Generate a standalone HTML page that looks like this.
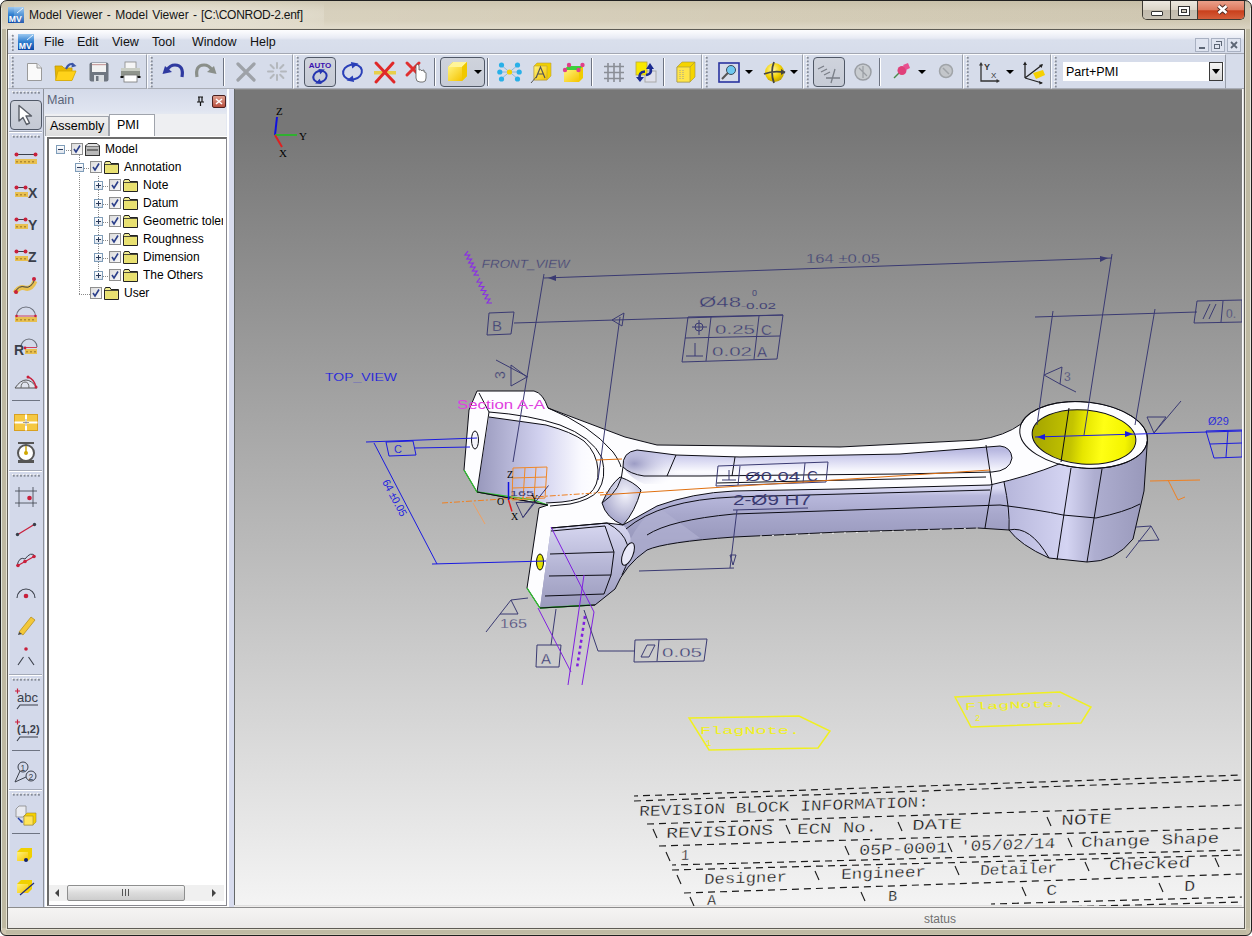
<!DOCTYPE html>
<html><head><meta charset="utf-8">
<style>
*{margin:0;padding:0;box-sizing:border-box}
html,body{width:1252px;height:936px;overflow:hidden;background:#fff}
body{position:relative;font-family:"Liberation Sans",sans-serif;font-size:12px;color:#000}
.a{position:absolute}
svg{position:absolute;overflow:visible}
#frame{left:0;top:0;width:1252px;height:936px;border:1px solid #202020;border-radius:7px 7px 6px 6px;background:linear-gradient(90deg,rgba(255,255,255,0.06) 0%,rgba(255,255,255,0.12) 25%,rgba(255,255,255,0.04) 60%,rgba(0,0,0,0.02) 100%),linear-gradient(#c9c1a9 0px,#d2cab4 10px,#d3cbb5 20px,#ddd6c4 27px,#cfc7b0 30px,#cbc3ab 100%)}
#title{left:29px;top:8px;font-size:12px;color:#141414;white-space:nowrap}
#client{left:7px;top:29px;width:1238px;height:900px;border:1px solid #5e5c55;background:#eeeceb}
#menubar{left:8px;top:30px;width:1236px;height:24px;background:linear-gradient(#fdfdfe 0px,#f6f7fb 3px,#e8ebf4 8px,#d9dfec 10px,#d6dcea 23px);border-bottom:1px solid #a3a7b2}
.menu{top:35px;font-size:12.5px;color:#111}
.tb{top:54px;height:35px;background:#d6dcea;border-top:1px solid #fbfcfe;border-left:1px solid #fbfcfe;border-right:1px solid #9aa0ac;border-bottom:1px solid #a9adb6}
.grip{width:3px;background-image:radial-gradient(circle at 1.6px 1.6px,#858b98 0.9px,transparent 1.3px),radial-gradient(circle at 0.9px 0.9px,#ffffff 0.9px,transparent 1.3px);background-size:3.6px 3.6px}
.sepv{width:1px;height:28px;top:58px;background:#6e7482;box-shadow:1px 0 0 #fff}
.pressed{top:57px;height:30px;border:1px solid #505866;border-radius:4px;background:linear-gradient(#cfd3dc,#c6cbd6)}
.dd{width:0;height:0;border-left:4px solid transparent;border-right:4px solid transparent;border-top:4px solid #000;top:70px}
#lefttb{left:8px;top:89px;width:36px;height:818px;background:linear-gradient(90deg,#eef1f8 0,#eef1f8 1px,#d3d9ea 2px);border-right:1px solid #8d929c}
#panel{left:43px;top:89px;width:186px;height:818px;background:#d5dbea}
#splitter{left:227px;top:89px;width:7px;height:818px;background:linear-gradient(90deg,#fff 0,#fff 2px,#d8dcee 2px)}
#view{left:234px;top:89px;width:1008px;height:817px;background:linear-gradient(#777777 0%,#efefef 100%);overflow:hidden}
#rstrip{left:1242px;top:89px;width:2px;height:818px;background:linear-gradient(90deg,#fafafa 1px,#e0e0e0 1px)}
#status{left:8px;top:907px;width:1236px;height:21px;background:linear-gradient(#f5f4f3,#ebe9e8);border-top:1px solid #8c8c8c}
#statustxt{left:924px;top:912px;font-size:12px;color:#707070}
.tree{font-size:12px;color:#000;white-space:nowrap}

</style></head><body>
<div id="frame" class="a"></div>
<div class="a" style="left:1142px;top:1px;width:103px;height:19px;border:1px solid #3d3a33;border-top:none;border-radius:0 0 5px 5px;overflow:hidden">
 <div class="a" style="left:0;top:0;width:28px;height:19px;background:linear-gradient(#ece8df 0%,#dcd6c9 45%,#c3bcae 50%,#c9c3b6 100%);border-right:1px solid #3d3a33"></div>
 <div class="a" style="left:28px;top:0;width:27px;height:19px;background:linear-gradient(#ece8df 0%,#dcd6c9 45%,#c3bcae 50%,#c9c3b6 100%);border-right:1px solid #3d3a33"></div>
 <div class="a" style="left:55px;top:0;width:47px;height:19px;background:linear-gradient(#eaa08a 0%,#de7a5f 45%,#c9401c 52%,#d7633f 100%)"></div>
 <div class="a" style="left:8px;top:10px;width:12px;height:5px;background:#fff;border:1px solid #333;border-radius:1px"></div>
 <div class="a" style="left:35px;top:5px;width:12px;height:10px;background:#fff;border:1px solid #333"></div>
 <div class="a" style="left:38px;top:8px;width:6px;height:4px;background:#cfc9bd;border:1px solid #333"></div>
 <svg style="left:73px;top:3px" width="13" height="11" viewBox="0 0 13 11"><path d="M2.5 2 L10.5 9 M10.5 2 L2.5 9" stroke="#4a2a22" stroke-width="4.4" stroke-linecap="butt"/><path d="M2.5 2 L10.5 9 M10.5 2 L2.5 9" stroke="#fff" stroke-width="2.6" stroke-linecap="butt"/></svg>
</div>
<svg style="left:8px;top:7px" width="16" height="16" viewBox="0 0 16 16"><defs><linearGradient id="mvg" x1="0" y1="0" x2="0" y2="1"><stop offset="0" stop-color="#9cc8f0"/><stop offset="0.45" stop-color="#3583d2"/><stop offset="1" stop-color="#0b47a6"/></linearGradient></defs><rect width="16" height="16" fill="url(#mvg)"/><path d="M9 6 L15 1" stroke="#e8f4ff" stroke-width="1"/><text x="0.8" y="14.6" font-family="Liberation Sans" font-weight="bold" font-size="8.6" fill="#fff">MV</text></svg>
<div class="a" style="left:14px;top:2px;width:310px;height:26px;background:radial-gradient(ellipse at center,rgba(255,255,250,0.45) 0%,rgba(255,255,250,0.25) 55%,rgba(255,255,250,0) 100%)"></div>
<div id="title" class="a" style="word-spacing:1px">Model Viewer - Model Viewer -</div><div class="a" style="left:201px;top:8px;font-size:12px;color:#141414;letter-spacing:-0.25px">[C:\CONROD-2.enf]</div>
<div class="a" style="left:1px;top:8px;width:1px;height:922px;background:#e2e6dc"></div>
<div class="a" style="left:2px;top:29px;width:4px;height:899px;background:#beb9a2"></div>
<div class="a" style="left:6px;top:29px;width:1px;height:900px;background:#e6e2d2"></div>
<div class="a" style="left:1250px;top:8px;width:1px;height:922px;background:#e2e6dc"></div>
<div class="a" style="left:1246px;top:29px;width:4px;height:899px;background:#beb9a2"></div>
<div class="a" style="left:1245px;top:29px;width:1px;height:900px;background:#e6e2d2"></div>
<div class="a" style="left:6px;top:929px;width:1240px;height:5px;background:#c0bba4;border-top:1px solid #e6e2d2"></div>
<div id="client" class="a"></div>
<div id="menubar" class="a"></div>
<div class="a grip" style="left:11px;top:34px;height:17px"></div>
<svg style="left:18px;top:34px" width="16" height="16" viewBox="0 0 16 16"><rect width="16" height="16" fill="url(#mvg)"/><path d="M9 6 L15 1" stroke="#e8f4ff" stroke-width="1"/><text x="0.8" y="14.6" font-family="Liberation Sans" font-weight="bold" font-size="8.6" fill="#fff">MV</text></svg>
<div class="a menu" style="left:44px">File</div>
<div class="a menu" style="left:77px">Edit</div>
<div class="a menu" style="left:112px">View</div>
<div class="a menu" style="left:152px">Tool</div>
<div class="a menu" style="left:192px">Window</div>
<div class="a menu" style="left:250px">Help</div>
<div class="a" style="left:1195px;top:38px;width:14px;height:14px;border:1px solid #a9b1c2;background:#dfe4f0"></div>
<div class="a" style="left:1199px;top:47px;width:6px;height:2px;background:#5d6675"></div>
<div class="a" style="left:1211px;top:38px;width:14px;height:14px;border:1px solid #a9b1c2;background:#dfe4f0"></div>
<div class="a" style="left:1214px;top:44px;width:6px;height:5px;border:1.5px solid #5d6675"></div>
<div class="a" style="left:1216px;top:41px;width:6px;height:5px;border-top:1.5px solid #5d6675;border-right:1.5px solid #5d6675"></div>
<div class="a" style="left:1227px;top:38px;width:14px;height:14px;border:1px solid #a9b1c2;background:#dfe4f0"></div>
<svg style="left:1230px;top:41px" width="8" height="8" viewBox="0 0 8 8"><path d="M1 1 L7 7 M7 1 L1 7" stroke="#5d6675" stroke-width="1.8"/></svg>
<div id="status" class="a"></div>
<div id="statustxt" class="a">status</div>
<div class="a" style="left:8px;top:54px;width:1236px;height:35px;background:#d6dcea;border-bottom:1px solid #a9adb6"></div>
<div class="a tb" style="left:8px;width:139px"></div>
<div class="a grip" style="left:11px;top:56px;height:32px"></div>
<div class="a tb" style="left:147px;width:146px"></div>
<div class="a grip" style="left:150px;top:56px;height:32px"></div>
<div class="a tb" style="left:293px;width:409px"></div>
<div class="a grip" style="left:296px;top:56px;height:32px"></div>
<div class="a tb" style="left:702px;width:101px"></div>
<div class="a grip" style="left:705px;top:56px;height:32px"></div>
<div class="a tb" style="left:803px;width:160px"></div>
<div class="a grip" style="left:806px;top:56px;height:32px"></div>
<div class="a tb" style="left:963px;width:88px"></div>
<div class="a grip" style="left:966px;top:56px;height:32px"></div>
<div class="a tb" style="left:1051px;width:175px"></div>
<div class="a grip" style="left:1054px;top:56px;height:32px"></div>
<div class="a sepv" style="left:223px"></div>
<div class="a sepv" style="left:434px"></div>
<div class="a sepv" style="left:487px"></div>
<div class="a sepv" style="left:591px"></div>
<div class="a sepv" style="left:663px"></div>
<div class="a sepv" style="left:879px"></div>
<div class="a pressed" style="left:304px;width:32px"></div>
<div class="a pressed" style="left:440px;width:45px"></div>
<div class="a pressed" style="left:813px;width:32px"></div>
<div class="a dd" style="left:474px"></div>
<div class="a dd" style="left:745px"></div>
<div class="a dd" style="left:790px"></div>
<div class="a dd" style="left:918px"></div>
<div class="a dd" style="left:1006px"></div>
<svg style="left:0px;top:0px" width="1" height="1" viewBox="0 0 1 1"><defs><linearGradient id="yel" x1="0" y1="0" x2="1" y2="1"><stop offset="0" stop-color="#fff27a"/><stop offset="1" stop-color="#f5c400"/></linearGradient><linearGradient id="gry" x1="0" y1="0" x2="0" y2="1"><stop offset="0" stop-color="#eeeeee"/><stop offset="1" stop-color="#8a8a8a"/></linearGradient><radialGradient id="glob" cx="0.4" cy="0.35" r="0.7"><stop offset="0" stop-color="#fff9b0"/><stop offset="0.6" stop-color="#f2d100"/><stop offset="1" stop-color="#b89a00"/></radialGradient></defs></svg>
<svg style="left:26px;top:62px" width="17" height="20" viewBox="0 0 17 20"><path d="M1.5 1.5 H11 L15.5 6 V18.5 H1.5 Z" fill="#fafafa" stroke="#9a9a9a"/><path d="M11 1.5 V6 H15.5" fill="#e6e6e6" stroke="#9a9a9a"/></svg>
<svg style="left:54px;top:61px" width="24" height="21" viewBox="0 0 24 21"><path d="M1 5 H8 L10 7 H18 V19 H2 Z" fill="#e8b800" stroke="#c29a00" stroke-width="0.8"/><path d="M4 10 H22 L18 19.5 H1.5 Z" fill="#ffd21a" stroke="#d6a800" stroke-width="0.8"/><path d="M12 8 Q15 1 20 4" fill="none" stroke="#3b56a8" stroke-width="2"/><path d="M18 1.5 L22.5 5 L17.5 6.5 Z" fill="#3b56a8"/></svg>
<svg style="left:89px;top:62px" width="20" height="20" viewBox="0 0 20 20"><rect x="0.5" y="0.5" width="19" height="19" rx="2" fill="#6f7680"/><rect x="3" y="1" width="14" height="9" fill="#f2f2f2"/><rect x="3" y="2" width="14" height="1.2" fill="#c9a0a0"/><rect x="5" y="13" width="10" height="7" fill="#d9dde2"/><rect x="7" y="14" width="2.5" height="5" fill="#6f7680"/></svg>
<svg style="left:120px;top:61px" width="21" height="22" viewBox="0 0 21 22"><rect x="5" y="1" width="11" height="7" fill="#f5f5f5" stroke="#888" stroke-width="0.8"/><rect x="1" y="7" width="19" height="9" rx="1.5" fill="#8f948c"/><rect x="1" y="7" width="19" height="3" fill="#c9cdc4"/><rect x="4" y="14" width="13" height="7" fill="#fff" stroke="#777" stroke-width="0.8"/><rect x="0.5" y="15" width="3" height="2" fill="#111"/><rect x="17.5" y="15" width="3" height="2" fill="#111"/></svg>
<svg style="left:162px;top:62px" width="23" height="17" viewBox="0 0 23 17"><path d="M20 15 Q22 3 13 3 Q8 3 5 8" fill="none" stroke="#2f3aa0" stroke-width="3.2"/><path d="M0.5 12 L3 4 L10 10 Z" fill="#2f3aa0"/></svg>
<svg style="left:194px;top:62px" width="23" height="17" viewBox="0 0 23 17"><path d="M3 15 Q1 3 10 3 Q15 3 18 8" fill="none" stroke="#8a8f8a" stroke-width="3.2"/><path d="M22.5 12 L20 4 L13 10 Z" fill="#8a8f8a"/></svg>
<svg style="left:235px;top:62px" width="22" height="20" viewBox="0 0 22 20"><path d="M3 2 L19 18 M19 2 L3 18" stroke="#9ea2a8" stroke-width="3.2" stroke-linecap="round"/></svg>
<svg style="left:266px;top:61px" width="22" height="21" viewBox="0 0 22 21"><g stroke="#b4b8bd" stroke-width="2" stroke-linecap="round"><path d="M11 2 V7 M11 14 V19 M2 10.5 H7 M15 10.5 H20 M4.6 4 L7.8 7.3 M14.2 13.7 L17.4 17 M17.4 4 L14.2 7.3 M7.8 13.7 L4.6 17"/></g></svg>
<svg style="left:306px;top:58px" width="28" height="28" viewBox="0 0 28 28"><text x="14" y="9.5" text-anchor="middle" font-family="Liberation Sans" font-weight="bold" font-size="8" fill="#3a10b0">AUTO</text><g transform="rotate(-20 14 18.5)"><ellipse cx="14" cy="18.5" rx="6.8" ry="5.6" fill="none" stroke="#2636b0" stroke-width="2"/><path d="M15 11 L21 13.5 L15 16.5 Z" fill="#2636b0"/><path d="M13 26 L7 23.5 L13 20.5 Z" fill="#2636b0"/></g></svg>
<svg style="left:341px;top:60px" width="23" height="24" viewBox="0 0 23 24"><g transform="rotate(-12 11.5 12)"><ellipse cx="11.5" cy="12" rx="9.5" ry="7.5" fill="none" stroke="#2a40b8" stroke-width="2"/><path d="M12 2 L19 5 L12 8.5 Z" fill="#2a40b8"/><path d="M11 22 L4 19 L11 15.5 Z" fill="#2a40b8"/></g></svg>
<svg style="left:373px;top:61px" width="24" height="23" viewBox="0 0 24 23"><rect x="1" y="10" width="22" height="3.5" fill="#e7cf4a"/><path d="M3 2 L21 21 M20 2 L3 21" stroke="#e02828" stroke-width="3" stroke-linecap="round"/></svg>
<svg style="left:405px;top:61px" width="23" height="22" viewBox="0 0 23 22"><path d="M2 2 L14 14 M14 2 L2 14" stroke="#e03030" stroke-width="3" stroke-linecap="round"/><path d="M11 8 V17 Q11 21 15 21 H18 Q21 21 21 17 V12 Q21 11 19 11 V9 Q17 9 17 10 Q16 8 14 9 V5 Q14 3.5 12.5 3.5 Q11 3.5 11 5 Z" fill="#fff" stroke="#555" stroke-width="0.8"/></svg>
<svg style="left:447px;top:61px" width="21" height="21" viewBox="0 0 21 21"><path d="M1 6 L6 1 H20 V15 L15 20 H1 Z" fill="#e8d000"/><rect x="1" y="6" width="14" height="14" fill="url(#yel)"/><path d="M1 6 L6 1 H20 L15 6 Z" fill="#fff59a"/><path d="M15 6 L20 1 V15 L15 20 Z" fill="#f0c800"/></svg>
<svg style="left:497px;top:62px" width="25" height="20" viewBox="0 0 25 20"><g stroke="#7ab0d8" stroke-width="0.8"><path d="M4 3 L21 17 M21 3 L4 17 M2 10 H23"/></g><g fill="#29b0e8"><circle cx="4.5" cy="3" r="2.6"/><circle cx="20.5" cy="3" r="2.6"/><circle cx="2.8" cy="10" r="2.6"/><circle cx="22.2" cy="10" r="2.6"/><circle cx="4.5" cy="17" r="2.6"/><circle cx="20.5" cy="17" r="2.6"/></g><circle cx="12.5" cy="10" r="2.6" fill="#f5d000"/></svg>
<svg style="left:530px;top:62px" width="22" height="22" viewBox="0 0 22 22"><path d="M4 4 L7 1 H21 V14 L17 18 H4 Z" fill="#f0d000" stroke="#b8a040" stroke-width="0.6"/><path d="M4 4 H17 V18 H4 Z" fill="url(#yel)" stroke="#b8a040" stroke-width="0.6"/><path d="M6 16 L10.5 5 L15 16 M7.8 12 H13.2" fill="none" stroke="#555" stroke-width="1.2"/><path d="M1 21 L7 14" stroke="#555" stroke-width="1"/></svg>
<svg style="left:562px;top:62px" width="23" height="21" viewBox="0 0 23 21"><path d="M2 8 L6 4 H21 V16 L17 20 H2 Z" fill="#f0cc00"/><rect x="2" y="8" width="15" height="12" fill="url(#yel)"/><path d="M2 8 L6 4 H21 L17 8 Z" fill="#3cd03c"/><g fill="#e0408a"><circle cx="3" cy="8" r="2.2"/><circle cx="7" cy="3" r="2.2"/><circle cx="20.5" cy="3" r="2.2"/><circle cx="16.5" cy="8" r="2.2"/></g></svg>
<svg style="left:604px;top:63px" width="21" height="20" viewBox="0 0 21 20"><g stroke="#8a8e96" stroke-width="1.6"><path d="M4 0 V19 M10 0 V19 M16 0 V19 M0 3.5 H20 M0 9.5 H20 M0 15.5 H20"/></g></svg>
<svg style="left:634px;top:61px" width="23" height="22" viewBox="0 0 23 22"><rect x="11" y="10" width="11" height="11" fill="#dfe0ea" stroke="#a8a8a8" stroke-width="1"/><rect x="2" y="1" width="11" height="13" fill="#f8e800" stroke="#b8a840" stroke-width="0.8"/><path d="M6 18 Q4 11 11 10.5 M16 6 Q19 13 12 14" fill="none" stroke="#1a2a90" stroke-width="2.6"/><path d="M2 16 L6 21 L10 16 Z M12 8 L16 2 L20 8 Z" fill="#1a2a90"/></svg>
<svg style="left:676px;top:61px" width="20" height="22" viewBox="0 0 20 22"><path d="M1 6 L6 1 H19 V16 L14 21 H1 Z" fill="#f5d500" stroke="#a09040" stroke-width="0.6"/><path d="M1 6 H14 V21 H1 Z" fill="#ffe54a" stroke="#a09040" stroke-width="0.6"/><path d="M4 9 V19 M7 9 V19" stroke="#999" stroke-width="1" stroke-dasharray="1 1"/><path d="M14 6 L19 1" stroke="#a09040" stroke-width="0.6"/></svg>
<svg style="left:718px;top:62px" width="22" height="21" viewBox="0 0 22 21"><rect x="1" y="1" width="20" height="19" fill="none" stroke="#2a34a0" stroke-width="1.6"/><circle cx="13" cy="8" r="4.5" fill="#6ec8f0" stroke="#3a4a5a" stroke-width="1"/><path d="M9.8 11 L4 17" stroke="#555" stroke-width="2"/></svg>
<svg style="left:763px;top:61px" width="23" height="23" viewBox="0 0 23 23"><circle cx="11.5" cy="11.5" r="9.5" fill="url(#glob)"/><path d="M1 13 Q11 9 22 11.5 M11 1 Q7 11 11 22" fill="none" stroke="#444" stroke-width="1.8"/><path d="M18 8 L22.5 11 L18 14 Z" fill="#444"/></svg>
<svg style="left:816px;top:61px" width="26" height="24" viewBox="0 0 26 24"><g stroke="#7a7f88" stroke-width="1.3" fill="none"><path d="M2 8 L8 5 M5 11 L11 8 M8 14 L14 11"/><path d="M10 17 H24 M19 8 L15 22"/></g></svg>
<svg style="left:853px;top:62px" width="20" height="20" viewBox="0 0 20 20"><circle cx="10" cy="10" r="8" fill="#c8ccd0" stroke="#9a9ea4" stroke-width="1.5"/><path d="M6 6 L14 14 M10 4 V16" stroke="#9a9ea4" stroke-width="1.2"/></svg>
<svg style="left:893px;top:62px" width="18" height="17" viewBox="0 0 18 17"><path d="M1 16 L7 10" stroke="#4a8a4a" stroke-width="1.4"/><circle cx="9" cy="8.5" r="4.5" fill="#e0407a"/><path d="M10 3 L15 1 L17 6 L13 8 Z" fill="#e85090"/></svg>
<svg style="left:938px;top:63px" width="16" height="16" viewBox="0 0 16 16"><circle cx="8" cy="8" r="6.5" fill="#c3c6ca" stroke="#a0a4a8" stroke-width="1.5"/><path d="M5 5 L11 11" stroke="#a0a4a8" stroke-width="1.5"/></svg>
<svg style="left:978px;top:61px" width="22" height="22" viewBox="0 0 22 22"><path d="M3 3 V20 H20" fill="none" stroke="#333" stroke-width="1.3"/><path d="M1 4.5 L3 1 L5 4.5 Z M18.5 18 L22 20 L18.5 22 Z" fill="#333"/><text x="6" y="9" font-family="Liberation Sans" font-size="9" font-weight="bold" fill="#333">Y</text><text x="13" y="17" font-family="Liberation Sans" font-size="8" fill="#333">X</text></svg>
<svg style="left:1022px;top:61px" width="24" height="22" viewBox="0 0 24 22"><path d="M11 12 L21 9 L23 14 L14 18 Z" fill="#f5d000"/><path d="M3 17 V2 M3 17 L20 4 M3 17 L20 22" fill="none" stroke="#222" stroke-width="1.3"/><path d="M1 4 L3 0.5 L5 4 Z M17 4 L21 3 L19.5 7 Z M17 20 L21 22 L17.5 23.5 Z" fill="#222"/></svg>
<div class="a" style="left:1063px;top:62px;width:161px;height:19px;background:#fff;border-right:1px solid #fff"></div>
<div class="a" style="left:1066px;top:65px;font-size:12.5px;color:#000">Part+PMI</div>
<div class="a" style="left:1209px;top:62px;width:14px;height:19px;border:1px solid #3a3a3a;background:linear-gradient(#f4f4f4,#d8d8d8)"></div>
<div class="a" style="left:1212px;top:69px;width:0;height:0;border-left:4px solid transparent;border-right:4px solid transparent;border-top:5px solid #000"></div><div id="panel" class="a"></div>
<div class="a" style="left:44px;top:89px;width:183px;height:26px;background:linear-gradient(#d4dae9,#dfe4f0 80%,#e6eaf3)"></div>
<div class="a" style="left:47px;top:93px;font-size:12.5px;color:#5a6478">Main</div>
<svg style="left:196px;top:96px" width="8" height="10" viewBox="0 0 8 10"><path d="M2 1 H7 M3 1 V6 M6 1 V6 M1 6 H8 M4.5 6 V10" stroke="#111" stroke-width="1.2" fill="none"/></svg>
<div class="a" style="left:212px;top:95px;width:14px;height:13px;border:1px solid #4a2020;border-radius:2px;background:linear-gradient(#e0a090,#b85040)"></div>
<svg style="left:215px;top:98px" width="8" height="7" viewBox="0 0 8 7"><path d="M1 1 L7 6 M7 1 L1 6" stroke="#fff" stroke-width="1.6"/></svg>
<div class="a" style="left:44px;top:113px;width:183px;height:24px;background:#e4e8f1"></div>
<div class="a" style="left:45px;top:114px;width:181px;height:23px;background:#eeeff2"></div>
<div class="a" style="left:45px;top:116px;width:64px;height:21px;border:1px solid #a0a4ac;border-bottom:none;background:linear-gradient(#f0f0f0,#dcdcdc)"></div>
<div class="a" style="left:50px;top:119px;font-size:12.5px;color:#000">Assembly</div>
<div class="a" style="left:109px;top:114px;width:46px;height:23px;border:1px solid #a0a4ac;border-bottom:none;background:#fff"></div>
<div class="a" style="left:117px;top:118px;font-size:12.5px;color:#000">PMI</div>
<div class="a" style="left:155px;top:136px;width:73px;height:1px;background:#a0a4ac"></div>
<div class="a" style="left:45px;top:136px;width:183px;height:771px;background:#fff;border:1px solid #fff"></div>
<div class="a" style="left:47px;top:137px;width:180px;height:769px;border-left:2px solid #6c6c6c;border-top:2px solid #6c6c6c;border-right:1px solid #88888f;border-bottom:1px solid #88888f;background:#fff"></div>
<div class="a" style="left:79px;top:155px;width:1px;height:140px;background-image:linear-gradient(#8a8a8a 50%,transparent 50%);background-size:1px 2px"></div>
<div class="a" style="left:98px;top:176px;width:1px;height:100px;background-image:linear-gradient(#8a8a8a 50%,transparent 50%);background-size:1px 2px"></div>
<div class="a" style="left:99px;top:186px;width:10px;height:1px;background-image:linear-gradient(90deg,#8a8a8a 50%,transparent 50%);background-size:2px 1px"></div>
<div class="a" style="left:99px;top:204px;width:10px;height:1px;background-image:linear-gradient(90deg,#8a8a8a 50%,transparent 50%);background-size:2px 1px"></div>
<div class="a" style="left:99px;top:222px;width:10px;height:1px;background-image:linear-gradient(90deg,#8a8a8a 50%,transparent 50%);background-size:2px 1px"></div>
<div class="a" style="left:99px;top:240px;width:10px;height:1px;background-image:linear-gradient(90deg,#8a8a8a 50%,transparent 50%);background-size:2px 1px"></div>
<div class="a" style="left:99px;top:258px;width:10px;height:1px;background-image:linear-gradient(90deg,#8a8a8a 50%,transparent 50%);background-size:2px 1px"></div>
<div class="a" style="left:99px;top:276px;width:10px;height:1px;background-image:linear-gradient(90deg,#8a8a8a 50%,transparent 50%);background-size:2px 1px"></div>
<div class="a" style="left:79px;top:294px;width:11px;height:1px;background-image:linear-gradient(90deg,#8a8a8a 50%,transparent 50%);background-size:2px 1px"></div>
<div class="a" style="left:64px;top:150px;width:7px;height:1px;background-image:linear-gradient(90deg,#8a8a8a 50%,transparent 50%);background-size:2px 1px"></div>
<div class="a" style="left:84px;top:168px;width:6px;height:1px;background-image:linear-gradient(90deg,#8a8a8a 50%,transparent 50%);background-size:2px 1px"></div>
<div class="a" style="left:56px;top:145px;width:9px;height:9px;border:1px solid #7f9db9;background:linear-gradient(#fff,#dde3ec)"></div>
<div class="a" style="left:58px;top:149px;width:5px;height:1px;background:#2a3a5a"></div>
<div class="a" style="left:71px;top:143px;width:12px;height:12px;border:1px solid #8f8f8f;background:linear-gradient(135deg,#dcdcdc,#fafafa)"></div>
<svg style="left:73px;top:145px" width="8" height="8" viewBox="0 0 8 8"><path d="M1 4 L3 7 L7 0.5" fill="none" stroke="#2b3f8a" stroke-width="1.6"/></svg>
<svg style="left:85px;top:143px" width="15" height="13" viewBox="0 0 15 13"><rect x="0.5" y="3" width="14" height="9.5" fill="#b8b8b8" stroke="#333"/><path d="M0.5 3 L3 0.5 H12 L14.5 3" fill="#e0e0e0" stroke="#333"/><rect x="2" y="6" width="11" height="2" fill="#707070"/></svg>
<div class="a tree" style="left:105px;top:142px">Model</div>
<div class="a" style="left:75px;top:163px;width:9px;height:9px;border:1px solid #7f9db9;background:linear-gradient(#fff,#dde3ec)"></div>
<div class="a" style="left:77px;top:167px;width:5px;height:1px;background:#2a3a5a"></div>
<div class="a" style="left:90px;top:161px;width:12px;height:12px;border:1px solid #8f8f8f;background:linear-gradient(135deg,#dcdcdc,#fafafa)"></div>
<svg style="left:92px;top:163px" width="8" height="8" viewBox="0 0 8 8"><path d="M1 4 L3 7 L7 0.5" fill="none" stroke="#2b3f8a" stroke-width="1.6"/></svg>
<svg style="left:104px;top:161px" width="15" height="13" viewBox="0 0 15 13"><path d="M0.5 2.5 L1.5 0.5 H6 L7 2.5 H14.5 V12.5 H0.5 Z" fill="#f0ec90" stroke="#222" stroke-width="1"/><rect x="1.5" y="4" width="12" height="8" fill="#e8e070"/><path d="M0.5 3.5 H14.5" stroke="#222" stroke-width="0.8"/></svg>
<div class="a tree" style="left:124px;top:160px">Annotation</div>
<div class="a" style="left:94px;top:181px;width:9px;height:9px;border:1px solid #7f9db9;background:linear-gradient(#fff,#dde3ec)"></div>
<div class="a" style="left:96px;top:185px;width:5px;height:1px;background:#2a3a5a"></div>
<div class="a" style="left:98px;top:183px;width:1px;height:5px;background:#2a3a5a"></div>
<div class="a" style="left:109px;top:179px;width:12px;height:12px;border:1px solid #8f8f8f;background:linear-gradient(135deg,#dcdcdc,#fafafa)"></div>
<svg style="left:111px;top:181px" width="8" height="8" viewBox="0 0 8 8"><path d="M1 4 L3 7 L7 0.5" fill="none" stroke="#2b3f8a" stroke-width="1.6"/></svg>
<svg style="left:123px;top:179px" width="15" height="13" viewBox="0 0 15 13"><path d="M0.5 2.5 L1.5 0.5 H6 L7 2.5 H14.5 V12.5 H0.5 Z" fill="#f0ec90" stroke="#222" stroke-width="1"/><rect x="1.5" y="4" width="12" height="8" fill="#e8e070"/><path d="M0.5 3.5 H14.5" stroke="#222" stroke-width="0.8"/></svg>
<div class="a tree" style="left:143px;top:178px;width:80px;overflow:hidden">Note</div>
<div class="a" style="left:94px;top:199px;width:9px;height:9px;border:1px solid #7f9db9;background:linear-gradient(#fff,#dde3ec)"></div>
<div class="a" style="left:96px;top:203px;width:5px;height:1px;background:#2a3a5a"></div>
<div class="a" style="left:98px;top:201px;width:1px;height:5px;background:#2a3a5a"></div>
<div class="a" style="left:109px;top:197px;width:12px;height:12px;border:1px solid #8f8f8f;background:linear-gradient(135deg,#dcdcdc,#fafafa)"></div>
<svg style="left:111px;top:199px" width="8" height="8" viewBox="0 0 8 8"><path d="M1 4 L3 7 L7 0.5" fill="none" stroke="#2b3f8a" stroke-width="1.6"/></svg>
<svg style="left:123px;top:197px" width="15" height="13" viewBox="0 0 15 13"><path d="M0.5 2.5 L1.5 0.5 H6 L7 2.5 H14.5 V12.5 H0.5 Z" fill="#f0ec90" stroke="#222" stroke-width="1"/><rect x="1.5" y="4" width="12" height="8" fill="#e8e070"/><path d="M0.5 3.5 H14.5" stroke="#222" stroke-width="0.8"/></svg>
<div class="a tree" style="left:143px;top:196px;width:80px;overflow:hidden">Datum</div>
<div class="a" style="left:94px;top:217px;width:9px;height:9px;border:1px solid #7f9db9;background:linear-gradient(#fff,#dde3ec)"></div>
<div class="a" style="left:96px;top:221px;width:5px;height:1px;background:#2a3a5a"></div>
<div class="a" style="left:98px;top:219px;width:1px;height:5px;background:#2a3a5a"></div>
<div class="a" style="left:109px;top:215px;width:12px;height:12px;border:1px solid #8f8f8f;background:linear-gradient(135deg,#dcdcdc,#fafafa)"></div>
<svg style="left:111px;top:217px" width="8" height="8" viewBox="0 0 8 8"><path d="M1 4 L3 7 L7 0.5" fill="none" stroke="#2b3f8a" stroke-width="1.6"/></svg>
<svg style="left:123px;top:215px" width="15" height="13" viewBox="0 0 15 13"><path d="M0.5 2.5 L1.5 0.5 H6 L7 2.5 H14.5 V12.5 H0.5 Z" fill="#f0ec90" stroke="#222" stroke-width="1"/><rect x="1.5" y="4" width="12" height="8" fill="#e8e070"/><path d="M0.5 3.5 H14.5" stroke="#222" stroke-width="0.8"/></svg>
<div class="a tree" style="left:143px;top:214px;width:80px;overflow:hidden">Geometric toler</div>
<div class="a" style="left:94px;top:235px;width:9px;height:9px;border:1px solid #7f9db9;background:linear-gradient(#fff,#dde3ec)"></div>
<div class="a" style="left:96px;top:239px;width:5px;height:1px;background:#2a3a5a"></div>
<div class="a" style="left:98px;top:237px;width:1px;height:5px;background:#2a3a5a"></div>
<div class="a" style="left:109px;top:233px;width:12px;height:12px;border:1px solid #8f8f8f;background:linear-gradient(135deg,#dcdcdc,#fafafa)"></div>
<svg style="left:111px;top:235px" width="8" height="8" viewBox="0 0 8 8"><path d="M1 4 L3 7 L7 0.5" fill="none" stroke="#2b3f8a" stroke-width="1.6"/></svg>
<svg style="left:123px;top:233px" width="15" height="13" viewBox="0 0 15 13"><path d="M0.5 2.5 L1.5 0.5 H6 L7 2.5 H14.5 V12.5 H0.5 Z" fill="#f0ec90" stroke="#222" stroke-width="1"/><rect x="1.5" y="4" width="12" height="8" fill="#e8e070"/><path d="M0.5 3.5 H14.5" stroke="#222" stroke-width="0.8"/></svg>
<div class="a tree" style="left:143px;top:232px;width:80px;overflow:hidden">Roughness</div>
<div class="a" style="left:94px;top:253px;width:9px;height:9px;border:1px solid #7f9db9;background:linear-gradient(#fff,#dde3ec)"></div>
<div class="a" style="left:96px;top:257px;width:5px;height:1px;background:#2a3a5a"></div>
<div class="a" style="left:98px;top:255px;width:1px;height:5px;background:#2a3a5a"></div>
<div class="a" style="left:109px;top:251px;width:12px;height:12px;border:1px solid #8f8f8f;background:linear-gradient(135deg,#dcdcdc,#fafafa)"></div>
<svg style="left:111px;top:253px" width="8" height="8" viewBox="0 0 8 8"><path d="M1 4 L3 7 L7 0.5" fill="none" stroke="#2b3f8a" stroke-width="1.6"/></svg>
<svg style="left:123px;top:251px" width="15" height="13" viewBox="0 0 15 13"><path d="M0.5 2.5 L1.5 0.5 H6 L7 2.5 H14.5 V12.5 H0.5 Z" fill="#f0ec90" stroke="#222" stroke-width="1"/><rect x="1.5" y="4" width="12" height="8" fill="#e8e070"/><path d="M0.5 3.5 H14.5" stroke="#222" stroke-width="0.8"/></svg>
<div class="a tree" style="left:143px;top:250px;width:80px;overflow:hidden">Dimension</div>
<div class="a" style="left:94px;top:271px;width:9px;height:9px;border:1px solid #7f9db9;background:linear-gradient(#fff,#dde3ec)"></div>
<div class="a" style="left:96px;top:275px;width:5px;height:1px;background:#2a3a5a"></div>
<div class="a" style="left:98px;top:273px;width:1px;height:5px;background:#2a3a5a"></div>
<div class="a" style="left:109px;top:269px;width:12px;height:12px;border:1px solid #8f8f8f;background:linear-gradient(135deg,#dcdcdc,#fafafa)"></div>
<svg style="left:111px;top:271px" width="8" height="8" viewBox="0 0 8 8"><path d="M1 4 L3 7 L7 0.5" fill="none" stroke="#2b3f8a" stroke-width="1.6"/></svg>
<svg style="left:123px;top:269px" width="15" height="13" viewBox="0 0 15 13"><path d="M0.5 2.5 L1.5 0.5 H6 L7 2.5 H14.5 V12.5 H0.5 Z" fill="#f0ec90" stroke="#222" stroke-width="1"/><rect x="1.5" y="4" width="12" height="8" fill="#e8e070"/><path d="M0.5 3.5 H14.5" stroke="#222" stroke-width="0.8"/></svg>
<div class="a tree" style="left:143px;top:268px;width:80px;overflow:hidden">The Others</div>
<div class="a" style="left:90px;top:287px;width:12px;height:12px;border:1px solid #8f8f8f;background:linear-gradient(135deg,#dcdcdc,#fafafa)"></div>
<svg style="left:92px;top:289px" width="8" height="8" viewBox="0 0 8 8"><path d="M1 4 L3 7 L7 0.5" fill="none" stroke="#2b3f8a" stroke-width="1.6"/></svg>
<svg style="left:104px;top:287px" width="15" height="13" viewBox="0 0 15 13"><path d="M0.5 2.5 L1.5 0.5 H6 L7 2.5 H14.5 V12.5 H0.5 Z" fill="#f0ec90" stroke="#222" stroke-width="1"/><rect x="1.5" y="4" width="12" height="8" fill="#e8e070"/><path d="M0.5 3.5 H14.5" stroke="#222" stroke-width="0.8"/></svg>
<div class="a tree" style="left:124px;top:286px">User</div>
<div class="a" style="left:49px;top:885px;width:175px;height:16px;background:#f0f0f0"></div>
<div class="a" style="left:55px;top:889px;width:0;height:0;border-top:4px solid transparent;border-bottom:4px solid transparent;border-right:4px solid #444"></div>
<div class="a" style="left:212px;top:889px;width:0;height:0;border-top:4px solid transparent;border-bottom:4px solid transparent;border-left:4px solid #444"></div>
<div class="a" style="left:67px;top:885px;width:118px;height:16px;border:1px solid #8e8f8f;border-radius:2px;background:linear-gradient(#f4f4f4,#dcdcdc 50%,#cdcdcd)"></div>
<div class="a" style="left:122px;top:889px;width:7px;height:7px;border-left:1px solid #555;border-right:1px solid #555"></div><div class="a" style="left:125px;top:889px;width:1px;height:7px;background:#555"></div><div id="lefttb" class="a"></div>
<div class="a grip" style="left:12px;top:91px;height:3px;width:28px"></div>
<div class="a" style="left:9px;top:131px;width:33px;height:1px;background:#a4aab8;box-shadow:0 1px 0 #fff"></div>
<div class="a grip" style="left:12px;top:135px;height:3px;width:28px"></div>
<div class="a" style="left:9px;top:470px;width:33px;height:1px;background:#a4aab8;box-shadow:0 1px 0 #fff"></div>
<div class="a grip" style="left:12px;top:474px;height:3px;width:28px"></div>
<div class="a" style="left:9px;top:674px;width:33px;height:1px;background:#a4aab8;box-shadow:0 1px 0 #fff"></div>
<div class="a grip" style="left:12px;top:678px;height:3px;width:28px"></div>
<div class="a" style="left:9px;top:789px;width:33px;height:1px;background:#a4aab8;box-shadow:0 1px 0 #fff"></div>
<div class="a grip" style="left:12px;top:793px;height:3px;width:28px"></div>
<div class="a" style="left:12px;top:400px;width:28px;height:1px;background:#6e7482"></div>
<div class="a" style="left:12px;top:750px;width:28px;height:1px;background:#6e7482"></div>
<div class="a" style="left:12px;top:833px;width:28px;height:1px;background:#6e7482"></div>
<div class="a" style="left:10px;top:100px;width:32px;height:30px;border:1px solid #505866;border-radius:4px;background:linear-gradient(#cfd3dc,#c4c9d4)"></div>
<svg style="left:16px;top:104px" width="21" height="22" viewBox="0 0 21 22"><path d="M3 1.5 L3 17 L7 13.5 L10.5 20.5 L13.5 19 L10 12 L15.5 12 Z" fill="#fff" stroke="#5a5f68" stroke-width="1.4" stroke-linejoin="round"/></svg>
<svg style="left:14px;top:152px" width="24" height="13" viewBox="0 0 24 13"><path d="M2 2.5 H22" stroke="#3a3f4a" stroke-width="1"/><circle cx="2.5" cy="2.5" r="2" fill="#c8203c"/><circle cx="21.5" cy="2.5" r="2" fill="#c8203c"/><rect x="1" y="7" width="22" height="5" fill="#e8c050"/><g fill="#b08a30"><rect x="2" y="9" width="2" height="1.5"/><rect x="6" y="9" width="2" height="1.5"/><rect x="10" y="9" width="2" height="1.5"/><rect x="14" y="9" width="2" height="1.5"/><rect x="18" y="9" width="2" height="1.5"/></g></svg>
<svg style="left:14px;top:185px" width="26" height="14" viewBox="0 0 26 14"><path d="M2 2.5 H12" stroke="#3a3f4a" stroke-width="1"/><circle cx="2.5" cy="2.5" r="2" fill="#c8203c"/><circle cx="11.5" cy="2.5" r="2" fill="#c8203c"/><rect x="1" y="7" width="13" height="5" fill="#e8c050"/><g fill="#b08a30"><rect x="2" y="9" width="2" height="1.5"/><rect x="6" y="9" width="2" height="1.5"/><rect x="10" y="9" width="2" height="1.5"/></g><text x="14" y="13" font-family="Liberation Sans" font-weight="bold" font-size="14" fill="#3a3f4a">X</text></svg>
<svg style="left:14px;top:217px" width="26" height="14" viewBox="0 0 26 14"><path d="M2 2.5 H12" stroke="#3a3f4a" stroke-width="1"/><circle cx="2.5" cy="2.5" r="2" fill="#c8203c"/><circle cx="11.5" cy="2.5" r="2" fill="#c8203c"/><rect x="1" y="7" width="13" height="5" fill="#e8c050"/><g fill="#b08a30"><rect x="2" y="9" width="2" height="1.5"/><rect x="6" y="9" width="2" height="1.5"/><rect x="10" y="9" width="2" height="1.5"/></g><text x="14" y="13" font-family="Liberation Sans" font-weight="bold" font-size="14" fill="#3a3f4a">Y</text></svg>
<svg style="left:14px;top:249px" width="26" height="14" viewBox="0 0 26 14"><path d="M2 2.5 H12" stroke="#3a3f4a" stroke-width="1"/><circle cx="2.5" cy="2.5" r="2" fill="#c8203c"/><circle cx="11.5" cy="2.5" r="2" fill="#c8203c"/><rect x="1" y="7" width="13" height="5" fill="#e8c050"/><g fill="#b08a30"><rect x="2" y="9" width="2" height="1.5"/><rect x="6" y="9" width="2" height="1.5"/><rect x="10" y="9" width="2" height="1.5"/></g><text x="14" y="13" font-family="Liberation Sans" font-weight="bold" font-size="14" fill="#3a3f4a">Z</text></svg>
<svg style="left:13px;top:276px" width="26" height="19" viewBox="0 0 26 19"><path d="M2 17 Q6 10 12 12 Q18 14 22 5" fill="none" stroke="#e8c050" stroke-width="5"/><path d="M2 16 Q6 9 12 11 Q18 13 22 3" fill="none" stroke="#3a3f4a" stroke-width="1"/><circle cx="3" cy="16" r="2" fill="#c8203c"/><circle cx="21" cy="3" r="2" fill="#c8203c"/></svg>
<svg style="left:14px;top:306px" width="24" height="16" viewBox="0 0 24 16"><path d="M2.5 10 A9.5 9 0 0 1 21.5 10" fill="none" stroke="#6a6f7a" stroke-width="1.1"/><path d="M2 10 H22" stroke="#d04060" stroke-width="1"/><rect x="1" y="11" width="22" height="5" fill="#e8c050"/><g fill="#b08a30"><rect x="2" y="13" width="2" height="1.5"/><rect x="6" y="13" width="2" height="1.5"/><rect x="10" y="13" width="2" height="1.5"/><rect x="14" y="13" width="2" height="1.5"/><rect x="18" y="13" width="2" height="1.5"/></g><circle cx="2.5" cy="10" r="1.3" fill="#c8203c"/><circle cx="21.5" cy="10" r="1.3" fill="#c8203c"/></svg>
<svg style="left:13px;top:337px" width="26" height="20" viewBox="0 0 26 20"><path d="M8 10 A8 8 0 0 1 24 10" fill="none" stroke="#6a6f7a" stroke-width="1.1"/><path d="M12 10.5 H24" stroke="#d04060" stroke-width="1"/><text x="1" y="18" font-family="Liberation Sans" font-weight="bold" font-size="14" fill="#3a3f4a">R</text><rect x="12" y="12" width="12" height="5" fill="#e8c050"/><g fill="#b08a30"><rect x="13" y="14" width="2" height="1.5"/><rect x="17" y="14" width="2" height="1.5"/><rect x="21" y="14" width="2" height="1.5"/></g><circle cx="12" cy="11" r="1.4" fill="#c8203c"/></svg>
<svg style="left:13px;top:374px" width="26" height="16" viewBox="0 0 26 16"><path d="M2 14 Q13 -2 24 14 Z" fill="#e0e4ee" stroke="#555" stroke-width="1"/><path d="M8 14 Q8 8 12 8 Q16 8 16 14" fill="none" stroke="#666"/><path d="M15 3 Q21 5 23 13" fill="none" stroke="#c8203c" stroke-width="1.4"/><circle cx="15" cy="3" r="1.5" fill="#c8203c"/><circle cx="23" cy="13" r="1.5" fill="#c8203c"/></svg>
<svg style="left:14px;top:414px" width="24" height="17" viewBox="0 0 24 17"><rect x="0.5" y="0.5" width="23" height="16" fill="#f5c842" stroke="#d8a020"/><path d="M0.5 8.5 H23.5 M12 0.5 V16.5" stroke="#fff" stroke-width="2"/><path d="M9 8.5 H15 M12 5 V12" stroke="#888" stroke-width="0.8"/></svg>
<svg style="left:16px;top:441px" width="20" height="23" viewBox="0 0 20 23"><rect x="2" y="1" width="16" height="2" fill="#555"/><circle cx="10" cy="12" r="8" fill="#fff" stroke="#555" stroke-width="2"/><path d="M10 12 V5" stroke="#c8a000" stroke-width="1.4"/><circle cx="10" cy="12" r="2" fill="#d0a800"/><rect x="2" y="19" width="16" height="3" fill="#555"/></svg>
<svg style="left:15px;top:487px" width="22" height="20" viewBox="0 0 22 20"><path d="M4 0 V20 M18 0 V20 M0 4 H22 M0 16 H22" stroke="#3a3f4a" stroke-width="0.8" fill="none"/><circle cx="14.5" cy="11" r="2.3" fill="#c8203c"/></svg>
<svg style="left:15px;top:522px" width="22" height="15" viewBox="0 0 22 15"><path d="M2 13 L20 2" stroke="#c8203c" stroke-width="1.3"/><circle cx="2.5" cy="12.5" r="1.7" fill="#3a3f4a"/><circle cx="19.5" cy="2.5" r="1.7" fill="#3a3f4a"/></svg>
<svg style="left:15px;top:551px" width="22" height="18" viewBox="0 0 22 18"><path d="M2 15 Q4 5 10 8 Q16 0 20 5" fill="none" stroke="#3a3f4a" stroke-width="1"/><path d="M2 15 L20 5" stroke="#c8203c" stroke-width="1.2"/><circle cx="3" cy="14.5" r="1.8" fill="#c8203c"/><circle cx="10" cy="10.5" r="1.8" fill="#c8203c"/><circle cx="19" cy="5.5" r="1.8" fill="#c8203c"/></svg>
<svg style="left:15px;top:585px" width="22" height="15" viewBox="0 0 22 15"><path d="M2 13 A9 9 0 0 1 20 13" fill="none" stroke="#3a3f4a" stroke-width="1.1"/><circle cx="11" cy="11" r="2.3" fill="#c8203c"/></svg>
<svg style="left:16px;top:614px" width="20" height="21" viewBox="0 0 20 21"><path d="M3 18 L15 3 L19 6 L7 21 Z" fill="#f3c83a" stroke="#b89020" stroke-width="0.8"/><path d="M3 18 L2 21 L6 20" fill="#444"/></svg>
<svg style="left:15px;top:646px" width="22" height="20" viewBox="0 0 22 20"><path d="M3 19 L8.5 11 M13.5 11 L19 19" fill="none" stroke="#3a3f4a" stroke-width="1.1"/><circle cx="11" cy="3" r="1.8" fill="#c8203c"/></svg>
<svg style="left:14px;top:688px" width="26" height="22" viewBox="0 0 26 22"><text x="3" y="14" font-family="Liberation Sans" font-size="13" fill="#3a3f4a">abc</text><path d="M3 21 L6 17 H24" fill="none" stroke="#3a3f4a" stroke-width="1.1"/><path d="M1 3 H6 M3.5 0.5 V5.5" stroke="#c8203c" stroke-width="1.2"/></svg>
<svg style="left:14px;top:719px" width="26" height="23" viewBox="0 0 26 23"><text x="3" y="14" font-family="Liberation Sans" font-weight="bold" font-size="11" fill="#3a3f4a">(1,2)</text><path d="M3 22 L6 18 H24" fill="none" stroke="#3a3f4a" stroke-width="1.1"/><path d="M1 3 H6 M3.5 0.5 V5.5" stroke="#c8203c" stroke-width="1.2"/></svg>
<svg style="left:14px;top:761px" width="24" height="22" viewBox="0 0 24 22"><circle cx="9" cy="6" r="5" fill="none" stroke="#3a3f4a" stroke-width="1"/><text x="6.5" y="9.5" font-family="Liberation Sans" font-size="8.5" fill="#3a3f4a">1</text><circle cx="17" cy="15" r="5" fill="none" stroke="#3a3f4a" stroke-width="1"/><text x="14.5" y="18.5" font-family="Liberation Sans" font-size="8.5" fill="#3a3f4a">2</text><path d="M1 21 L6 10 M1 21 L12 16" stroke="#3a3f4a" stroke-width="1"/></svg>
<svg style="left:14px;top:804px" width="24" height="23" viewBox="0 0 24 23"><path d="M2 5 L5 2 H12 V10 L9 13 H2 Z" fill="#e8eaf0" stroke="#888" stroke-width="0.8"/><path d="M10 12 L13 9 H22 V18 L19 21 H10 Z" fill="#f5d000" stroke="#a08a30" stroke-width="0.6"/><rect x="10" y="12" width="9" height="9" fill="#ffe45a" stroke="#a08a30" stroke-width="0.6"/><path d="M4 14 L8 18" stroke="#1f3aa8" stroke-width="1.5"/><path d="M9 19 L6 18 L8 16 Z" fill="#1f3aa8"/></svg>
<svg style="left:16px;top:847px" width="18" height="16" viewBox="0 0 18 16"><path d="M1 5 L5 1 H16 V10 L12 14 H1 Z" fill="#f0d000"/><rect x="1" y="5" width="11" height="9" fill="url(#yel)"/><circle cx="10" cy="13" r="2" fill="#10206a"/></svg>
<svg style="left:16px;top:879px" width="19" height="17" viewBox="0 0 19 17"><path d="M1 5 L5 1 H16 V10 L12 14 H1 Z" fill="#f0d000"/><rect x="1" y="5" width="11" height="9" fill="url(#yel)"/><path d="M4 16 L18 4" stroke="#1f2a7a" stroke-width="1.2"/></svg><div id="splitter" class="a"></div>
<div id="rstrip" class="a"></div>
<div id="view" class="a">
<svg style="left:0;top:0" width="1008" height="817" viewBox="234 89 1008 817">
<defs>
<linearGradient id="bg" x1="0" y1="89" x2="0" y2="906" gradientUnits="userSpaceOnUse"><stop offset="0" stop-color="#777"/><stop offset="0.05" stop-color="#777"/><stop offset="1" stop-color="#f4f4f4"/></linearGradient>
<linearGradient id="lav" x1="0" y1="488" x2="0" y2="540" gradientUnits="userSpaceOnUse"><stop offset="0" stop-color="#dcdcf4"/><stop offset="0.15" stop-color="#b8b8dc"/><stop offset="0.5" stop-color="#a8a8cc"/><stop offset="1" stop-color="#9898bc"/></linearGradient>
<linearGradient id="cyl" x1="1009" y1="0" x2="1147" y2="0" gradientUnits="userSpaceOnUse"><stop offset="0" stop-color="#b8b8dc"/><stop offset="0.42" stop-color="#d4d4f2"/><stop offset="0.62" stop-color="#aeaed0"/><stop offset="1" stop-color="#9898ba"/></linearGradient>
<linearGradient id="bore" x1="477" y1="0" x2="600" y2="0" gradientUnits="userSpaceOnUse"><stop offset="0" stop-color="#9898bc"/><stop offset="0.5" stop-color="#d0d0ee"/><stop offset="0.85" stop-color="#fafaff"/><stop offset="1" stop-color="#ffffff"/></linearGradient>
<linearGradient id="capside" x1="0" y1="527" x2="0" y2="608" gradientUnits="userSpaceOnUse"><stop offset="0" stop-color="#d4d4ee"/><stop offset="0.5" stop-color="#b4b4d4"/><stop offset="1" stop-color="#9a9abc"/></linearGradient>
<linearGradient id="recess" x1="0" y1="450" x2="0" y2="476" gradientUnits="userSpaceOnUse"><stop offset="0" stop-color="#b8b8e0"/><stop offset="0.35" stop-color="#d4d4f0"/><stop offset="0.85" stop-color="#fcfcff"/><stop offset="1" stop-color="#f0f0fa"/></linearGradient>
<linearGradient id="yb" x1="1032" y1="0" x2="1136" y2="0" gradientUnits="userSpaceOnUse"><stop offset="0" stop-color="#a4a400"/><stop offset="0.38" stop-color="#c4c400"/><stop offset="0.5" stop-color="#e6e600"/><stop offset="0.68" stop-color="#ffff14"/><stop offset="0.9" stop-color="#f4f400"/><stop offset="1" stop-color="#d4d400"/></linearGradient>
<radialGradient id="dia" cx="0.6" cy="0.35" r="0.7"><stop offset="0" stop-color="#f4f4fc"/><stop offset="1" stop-color="#9c9cc4"/></radialGradient><radialGradient id="cup" cx="0.2" cy="0.4" r="0.8"><stop offset="0" stop-color="#9c9cc4"/><stop offset="1" stop-color="#e8e8f8" stop-opacity="0"/></radialGradient>
</defs>
<rect x="234" y="89" width="1008" height="817" fill="url(#bg)"/><path d="M234 89.5 H1242" stroke="#8a8a8a" stroke-width="1"/><path d="M234.5 89 V906" stroke="#646868" stroke-width="1"/><path d="M234 905.5 H1242" stroke="#e0e0e0" stroke-width="1"/>
<path d="M477 391 L534 391 Q543 393 548 408 L625 437 L657 445 L840 447 L978 440 Q1005 436 1021.3 423.8 A64 33 5 0 1 1147.4 440.6 L1144 491 L1133 539 Q1115 562 1087 562 L1049 558 Q1020 545 1009 530 L978 528 L840 532 L734 537 Q665 542 647 550 Q625 565 615 589 L595 605 L540 608 L527 588 L539 508 L548 505 L477 492 L464 470 L469 410 Z" fill="url(#lav)"/>
<path d="M1019.8 429.4 A64 33 5 0 0 1147.4 440.6 L1144 491 L1133 539 Q1115 562 1087 562 L1049 558 Q1020 545 1009 530 L1004 482 Z" fill="url(#cyl)"/>
<path d="M477 391 L534 391 Q543 393 548 408 L625 437 L657 445 L840 447 L978 440 Q1005 436 1021.3 423.8 A64 33 5 0 1 1147.4 440.6 A64 33 5 0 1 1059.1 464 Q1030 476 990 485 L840 489 L734 491 Q692 493 657 506 L623 525 L607 523 L551 528 L540 608 L527 588 L539 508 L548 505 L477 492 L464 470 L469 410 Z" fill="#fdfdff"/>
<path d="M551 528 L607 523 L623 525 Q640 540 622 575 L615 589 L595 605 L540 608 Z" fill="url(#capside)"/>
<path d="M602 503 Q610 485 620 477 Q634 482 641 490 Q635 512 623 525 Q606 518 602 503 Z" fill="url(#dia)"/>
<path d="M657 506 Q640 520 630 540 Q625 560 622 575 Q640 552 660 545 L700 538 Z" fill="#b0b0d2" opacity="0.7"/>
<path d="M489 417 L546 425 Q572 432 584 441 Q597 453 598 470 Q599 486 589 494 Q580 500 562 502 L546 503 L533 500 L477 492 Z" fill="url(#bore)"/>
<path d="M623 467 Q622 452 637 450 L676 455 L740 457 L900 454 L1000 446 Q1011 447 1012 458 Q1010 471 992 472 L900 474 L700 476 L644 476 Q630 474 623 467 Z" fill="url(#recess)"/>
<path d="M623 467 Q622 452 637 450 L676 454 L680 484 L644 484 Q630 478 623 467 Z" fill="url(#cup)"/>
<ellipse cx="1084" cy="437" rx="52" ry="27" fill="url(#yb)" transform="rotate(5 1084 437)"/>
<ellipse cx="1084" cy="437" rx="52" ry="27" transform="rotate(5 1084 437)" fill="none" stroke="#0c0c14" stroke-width="1"/>
<ellipse cx="1083.6" cy="435" rx="64" ry="33" transform="rotate(5 1083.6 435)" fill="none" stroke="#0c0c14" stroke-width="1"/>
<path d="M477 391 L534 391 Q543 393 548 408 L625 437 L657 445 L840 447 L978 440 Q1005 436 1021.3 423.8 A64 33 5 0 1 1147.4 440.6 L1144 491 L1133 539 Q1115 562 1087 562 L1049 558 Q1020 545 1009 530 L978 528 L840 532 L734 537 Q665 542 647 550 Q625 565 615 589 L595 605 L540 608 L527 588 L539 508 L548 505 L477 492 L464 470 L469 410 Z" fill="none" stroke="#0c0c14" stroke-width="1"/>
<path d="M1147.4 440.6 A64 33 5 0 1 1059.1 464 Q1030 476 990 485 L840 489 L734 491 Q692 493 657 506 L623 525 L607 523 L551 528" fill="none" stroke="#0c0c14" stroke-width="1"/>
<path d="M479 393 L489 412 L477 492 M489 412 Q530 415 560 425 Q592 437 602 458 Q607 478 598 491 Q590 500 570 504 L550 506" fill="none" stroke="#0c0c14" stroke-width="1"/>
<path d="M489 417 L546 425 Q572 432 584 441 Q597 453 598 470 Q599 486 589 494 Q580 500 562 502 L546 503" fill="none" stroke="#0c0c14" stroke-width="1"/>
<path d="M548 408 Q590 425 613 452 Q620 462 621 467" fill="none" stroke="#0c0c14" stroke-width="1"/>
<path d="M623 467 Q622 452 637 450 L676 455 L740 457 L900 454 L1000 446 Q1011 447 1012 458 Q1010 471 992 472 L900 474 L700 476 L644 476 Q630 474 623 467 Z" fill="none" stroke="#0c0c14" stroke-width="1"/>
<path d="M623 467 Q622 490 602 503 M602 503 Q610 485 620 477 Q634 482 641 490 Q635 512 623 525 Q606 518 602 503" fill="none" stroke="#0c0c14" stroke-width="1"/>
<path d="M551 528 L607 523 M551 531 L605 526 M550 554 L614 552 M549 576 L611 575 M545 596 L604 594 M607 523 Q640 540 622 575 M605 526 L614 552 L611 575 L604 594" fill="none" stroke="#0c0c14" stroke-width="1"/>
<path d="M647 535 Q670 520 734 514 L1000 505 Q1040 510 1063 515 L1096 518 Q1125 512 1140 504" fill="none" stroke="#0c0c14" stroke-width="1"/>
<path d="M626 529 Q660 500 734 497 L990 490" fill="none" stroke="#0c0c14" stroke-width="1"/>
<path d="M1071 468 L1057 560 M1102 469 L1087 562 M1069 408 L1061 462" fill="none" stroke="#0c0c14" stroke-width="1"/>
<path d="M986 445 L992 485 L985 528 M1004 482 Q1010 510 1009 530" fill="none" stroke="#0c0c14" stroke-width="1"/>
<path d="M1009 530 Q1030 525 1049 558" fill="none" stroke="#0c0c14" stroke-width="1"/>
<path d="M735 457 L732 476 M676 455 L667 476 M717 483 L986 477" fill="none" stroke="#0c0c14" stroke-width="1"/>
<ellipse cx="475" cy="440" rx="3.5" ry="9" fill="#f4f4fa" stroke="#0c0c14" stroke-width="1"/>
<ellipse cx="540" cy="562" rx="3.5" ry="8" fill="#e4e400" stroke="#0c0c14" stroke-width="1"/>
<ellipse cx="628" cy="554" rx="5" ry="12" fill="#e8e8f8" stroke="#0c0c14" stroke-width="1" transform="rotate(22 628 554)"/>
<path d="M464 470 L477 492 L533 500 L548 505" fill="none" stroke="#30c030" stroke-width="1.3"/><path d="M527 588 L540 608 L592 605" fill="none" stroke="#30c030" stroke-width="1.3"/>
<path d="M477 492 L548 505 M540 608 L595 605" fill="none" stroke="#0c0c14" stroke-width="1"/>
<path d="M760 536 L978 528" stroke="#fff" stroke-width="1" stroke-dasharray="2 10" fill="none" opacity="0.8"/><path d="M275 135 L277 117" stroke="#1010e0" stroke-width="2"/><path d="M275 135 L297 135" stroke="#30b030" stroke-width="2"/><path d="M275 135 L282 147" stroke="#e02020" stroke-width="2"/>
<text x="276" y="115" font-family="Liberation Serif" font-size="11" fill="#000">Z</text>
<text x="299" y="140" font-family="Liberation Serif" font-size="11" fill="#000">Y</text>
<text x="279" y="157" font-family="Liberation Serif" font-size="11" fill="#000">X</text>
<text x="482" y="268" font-family="Liberation Sans" font-size="12" fill="#3a3a72" stroke="url(#bg)" stroke-width="0.3" textLength="88" lengthAdjust="spacingAndGlyphs" transform="skewX(-12) translate(56 0)">FRONT_VIEW</text>
<path d="M468.0 251.1 L464.9 254.9 L469.8 255.1 L466.8 258.9 L471.7 259.1 L468.6 262.9 L473.5 263.1 L470.4 266.9 L475.3 267.1 L472.3 270.9 L477.2 271.1 L474.1 274.9 L479.0 275.1 M480.0 278.0 L477.0 282.0 L482.0 282.2 L479.0 286.2 L484.0 286.4 L481.0 290.4 L486.0 290.5 L483.0 294.5 L488.0 294.7 L485.0 298.7 L490.0 298.9 L487.0 302.9 L492.0 303.0" fill="none" stroke="#8a2be8" stroke-width="1.1"/>
<path d="M544 278 L1112 258 M544 274 L513 462 M1112 254 L1084 435" fill="none" stroke="#3a3a72" stroke-width="1"/>
<path d="M548 278 L556 275 L556 281 Z M1108 258 L1100 256 L1100 262 Z" fill="#3a3a72"/>
<text x="806" y="263" font-family="Liberation Sans" font-size="12" fill="#3a3a72" stroke="url(#bg)" stroke-width="0.3" textLength="74" lengthAdjust="spacingAndGlyphs" >164 ±0.05</text>
<path d="M489 313 L514 312 L511 334 L487 335 Z" fill="none" stroke="#3a3a72" stroke-width="1"/>
<text x="492" y="331" font-family="Liberation Sans" font-size="15" fill="#3a3a72" stroke="url(#bg)" stroke-width="0.3" >B</text>
<path d="M514 323 L783 315 M620 317 L598 480" fill="none" stroke="#3a3a72" stroke-width="1"/>
<path d="M612 320 L624 313 L622 326 Z" fill="none" stroke="#3a3a72" stroke-width="1"/>
<text x="699" y="307" font-family="Liberation Sans" font-size="15" fill="#3a3a72" stroke="url(#bg)" stroke-width="0.3" textLength="42" lengthAdjust="spacingAndGlyphs" >Ø48</text>
<text x="752" y="296" font-family="Liberation Sans" font-size="9" fill="#3a3a72" stroke="url(#bg)" stroke-width="0.1" >0</text>
<text x="741" y="309" font-family="Liberation Sans" font-size="9" fill="#3a3a72" stroke="url(#bg)" stroke-width="0.1" textLength="35" lengthAdjust="spacingAndGlyphs" >-0.02</text>
<path d="M688 317 L783 315 L777 359 L682 362 Z M685 338 L780 336 M711 317 L706 361 M759 316 L754 359" fill="none" stroke="#3a3a72" stroke-width="1"/>
<text x="715" y="334" font-family="Liberation Sans" font-size="13" fill="#3a3a72" stroke="url(#bg)" stroke-width="0.3" textLength="40" lengthAdjust="spacingAndGlyphs" >0.25</text>
<text x="761" y="335" font-family="Liberation Sans" font-size="15" fill="#3a3a72" stroke="url(#bg)" stroke-width="0.3" >C</text>
<text x="712" y="356" font-family="Liberation Sans" font-size="13" fill="#3a3a72" stroke="url(#bg)" stroke-width="0.3" textLength="40" lengthAdjust="spacingAndGlyphs" >0.02</text>
<text x="757" y="357" font-family="Liberation Sans" font-size="15" fill="#3a3a72" stroke="url(#bg)" stroke-width="0.3" >A</text>
<path d="M692 327 H707 M699 320 V335" fill="none" stroke="#3a3a72" stroke-width="1"/><circle cx="699" cy="327" r="4" fill="none" stroke="#3a3a72" stroke-width="1"/>
<path d="M686 356 H703 M695 343 V356" fill="none" stroke="#3a3a72" stroke-width="1"/>
<path d="M496 360 L528 377 M511 365 L527 377 L511 386 Z" fill="none" stroke="#3a3a72" stroke-width="1"/>
<text x="0" y="0" font-family="Liberation Sans" font-size="14" fill="#3a3a72" stroke="#9c9c9c" stroke-width="0.3" transform="translate(505 379) rotate(-90)">3</text>
<text x="325" y="381" font-family="Liberation Sans" font-size="10" fill="#1a1ae0" stroke="url(#bg)" stroke-width="0.1" textLength="72" lengthAdjust="spacingAndGlyphs" >TOP_VIEW</text>
<text x="457" y="409" font-family="Liberation Sans" font-size="13" fill="#e040e0" textLength="88" lengthAdjust="spacingAndGlyphs">Section A-A</text>
<path d="M366 442 L477 438 M374 443 L437 564 M432 564 L546 561 M415 448 L470 447" fill="none" stroke="#1a1ae0" stroke-width="1"/>
<path d="M386 442 L413 441 L416 455 L389 456 Z" fill="none" stroke="#1a1ae0" stroke-width="1"/>
<text x="394" y="453" font-family="Liberation Sans" font-size="11" fill="#1a1ae0" stroke="url(#bg)" stroke-width="0.1" >C</text>
<text x="0" y="0" font-family="Liberation Sans" font-size="11" fill="#1a1ae0" transform="translate(382 482) rotate(62)" textLength="40" lengthAdjust="spacingAndGlyphs">64 ±0.05</text>
<path d="M486 632 L511 600 L518 614 L500 614 M511 600 L528 598" fill="none" stroke="#3a3a72" stroke-width="1"/>
<text x="500" y="628" font-family="Liberation Sans" font-size="12" fill="#3a3a72" stroke="url(#bg)" stroke-width="0.3" textLength="27" lengthAdjust="spacingAndGlyphs" >165</text>
<path d="M537 645 L561 645 L559 667 L536 667 Z M551 645 L556 609" fill="none" stroke="#3a3a72" stroke-width="1"/>
<text x="541" y="664" font-family="Liberation Sans" font-size="15" fill="#3a3a72" stroke="url(#bg)" stroke-width="0.3" >A</text>
<path d="M635 640 L707 639 L704 661 L634 662 Z M659 640 L657 661 M635 651 L598 651 L584 610" fill="none" stroke="#3a3a72" stroke-width="1"/>
<path d="M641 657 L647 645 L655 645 L649 657 Z" fill="none" stroke="#3a3a72" stroke-width="1"/>
<text x="662" y="657" font-family="Liberation Sans" font-size="13" fill="#3a3a72" stroke="url(#bg)" stroke-width="0.3" textLength="40" lengthAdjust="spacingAndGlyphs" >0.05</text>
<path d="M551 527 L594 612 L582 685 M584 575 L568 685 M538 608 L571 672" fill="none" stroke="#8020e0" stroke-width="1"/>
<path d="M585 616 L577 668" fill="none" stroke="#8020e0" stroke-width="2.5" stroke-dasharray="3 3"/>
<path d="M639 571 L734 568 M730 568 L737 510 M733 565 L730 555 L736 555 Z" fill="none" stroke="#3a3a72" stroke-width="1"/>
<path d="M718 466 L828 462 L826 482 L716 486 Z M740 466 L738 485 M805 463 L803 483" fill="none" stroke="#3a3a72" stroke-width="1"/>
<text x="745" y="481" font-family="Liberation Sans" font-size="13" fill="#3a3a72" stroke="none" stroke-width="0.3" textLength="55" lengthAdjust="spacingAndGlyphs" >Ø0.04</text>
<text x="807" y="481" font-family="Liberation Sans" font-size="15" fill="#3a3a72" stroke="none" stroke-width="0.3" >C</text>
<path d="M722 480 H736 M729 470 V480" fill="none" stroke="#3a3a72" stroke-width="1"/>
<text x="733" y="505" font-family="Liberation Sans" font-size="14" fill="#3a3a72" stroke="none" stroke-width="0.3" textLength="78" lengthAdjust="spacingAndGlyphs" >2-Ø9 H7</text>
<path d="M733 510 L808 508" fill="none" stroke="#3a3a72" stroke-width="1"/>
<path d="M1035 317 L1197 312 M1053 311 L1037 425 M1155 309 L1135 425" fill="none" stroke="#3a3a72" stroke-width="1"/>
<path d="M1197 301 L1242 300 L1242 322 L1194 323 Z M1223 301 L1221 322" fill="none" stroke="#3a3a72" stroke-width="1"/>
<path d="M1203 319 L1210 304 M1209 319 L1216 304" fill="none" stroke="#3a3a72" stroke-width="1"/>
<text x="1226" y="318" font-family="Liberation Sans" font-size="12" fill="#3a3a72" stroke="url(#bg)" stroke-width="0.3" >0.</text>
<path d="M1044 375 L1062 367 L1060 384 Z M1060 384 L1076 392" fill="none" stroke="#3a3a72" stroke-width="1"/>
<text x="1064" y="381" font-family="Liberation Sans" font-size="12" fill="#3a3a72" stroke="url(#bg)" stroke-width="0.3" >3</text>
<path d="M1147 417 L1166 417 L1154 433 Z M1154 433 L1181 401" fill="none" stroke="#3a3a72" stroke-width="1"/>
<path d="M1126 558 L1151 526 L1159 540 L1138 541 M1151 526 L1136 527" fill="none" stroke="#3a3a72" stroke-width="1"/>
<path d="M1035 437 L1242 431" fill="none" stroke="#1a1ae0" stroke-width="1"/>
<path d="M1037 437 L1045 434 L1045 440 Z M1133 434 L1125 431 L1125 437 Z" fill="#1a1ae0"/>
<text x="1208" y="425" font-family="Liberation Sans" font-size="11" fill="#1a1ae0" stroke="url(#bg)" stroke-width="0.1" >Ø29</text>
<path d="M1206 431 L1242 430 L1242 457 L1214 458 Z M1210 444 L1242 443 M1228 431 L1226 457" fill="none" stroke="#1a1ae0" stroke-width="1"/>
<path d="M442 503 L610 492" stroke="#f08020" stroke-width="1" stroke-dasharray="6 2 2 2" fill="none"/>
<path d="M596 460 L622 459 M600 495 L990 470" stroke="#e07010" stroke-width="1" fill="none"/>
<path d="M1150 481 L1200 480 M1168 480 L1178 500 L1185 497" stroke="#f08020" stroke-width="1" fill="none"/>
<g stroke="#f08828" stroke-width="1" fill="none"><path d="M513 468 L547 467 L545 498 L512 500 Z M525 468 L523 499 M536 467 L534 499 M512 478 L546 477 M512 488 L546 487"/></g>
<path d="M516 502.5 L534 502 L523 517.5 Z M523 517.5 L548.5 485.5" fill="none" stroke="#3a3a72" stroke-width="1"/>
<text x="510" y="496" font-family="Liberation Sans" font-size="8" fill="#3a3a72" textLength="24" lengthAdjust="spacingAndGlyphs">165</text>
<path d="M508.5 500 L508.5 482" stroke="#1010e0" stroke-width="1.5"/><path d="M508.5 500 L512 511.5" stroke="#e02020" stroke-width="1.5"/>
<text x="507" y="478" font-family="Liberation Serif" font-size="10" fill="#000">Z</text>
<text x="497" y="505" font-family="Liberation Serif" font-size="10" fill="#000">O</text>
<text x="511" y="520" font-family="Liberation Serif" font-size="10" fill="#000">X</text>
<text x="531" y="502" font-family="Liberation Serif" font-size="10" fill="#000">Y</text>
<path d="M473 503 L485 524" stroke="#f0a060" stroke-width="1" fill="none"/>
<path d="M689 718 L799 716 L830 731 L818 748 L709 750 Z" fill="none" stroke="#f0f020" stroke-width="1.5"/>
<text x="700" y="734" font-family="Liberation Mono" font-size="10" fill="#f0f020" textLength="100" lengthAdjust="spacingAndGlyphs">FlagNote.</text><text x="706" y="746" font-family="Liberation Mono" font-size="9" fill="#f0f020">1</text>
<path d="M955 697 L1060 692 L1091 707 L1081 723 L971 727 Z" fill="none" stroke="#f0f020" stroke-width="1.5"/>
<text x="965" y="710" font-family="Liberation Mono" font-size="10" fill="#f0f020" textLength="100" lengthAdjust="spacingAndGlyphs" transform="rotate(-2 965 710)">FlagNote.</text><text x="975" y="721" font-family="Liberation Mono" font-size="9" fill="#f0f020">2</text>
<path d="M634 801 L1242 780" stroke="#1a1a1a" stroke-width="1.2" stroke-dasharray="7 5" fill="none"/>
<path d="M634 796 L1242 775" stroke="#1a1a1a" stroke-width="1.2" stroke-dasharray="7 5" stroke-dashoffset="3" fill="none"/>
<path d="M647 824 L1242 805" stroke="#1a1a1a" stroke-width="1.2" stroke-dasharray="7 5" fill="none"/>
<path d="M659 846 L1242 828" stroke="#1a1a1a" stroke-width="1.2" stroke-dasharray="7 5" fill="none"/>
<path d="M672 870 L1242 855" stroke="#1a1a1a" stroke-width="1.2" stroke-dasharray="7 5" fill="none"/>
<path d="M672 865 L1242 850" stroke="#1a1a1a" stroke-width="1.2" stroke-dasharray="7 5" stroke-dashoffset="3" fill="none"/>
<path d="M684 893 L1242 874" stroke="#1a1a1a" stroke-width="1.2" stroke-dasharray="7 5" fill="none"/>
<path d="M991 909 L1242 902" stroke="#1a1a1a" stroke-width="1.2" stroke-dasharray="7 5" fill="none"/>
<path d="M991 904 L1242 897" stroke="#1a1a1a" stroke-width="1.2" stroke-dasharray="7 5" stroke-dashoffset="3" fill="none"/>
<text x="0" y="0" font-family="Liberation Mono" font-size="15" fill="#111" stroke="#e8e8e8" stroke-width="0.3" textLength="290" lengthAdjust="spacingAndGlyphs" transform="translate(639 816) rotate(-1.85) skewX(-4)">REVISION&#160;BLOCK&#160;INFORMATION:</text>
<path d="M653 829 L657 838" stroke="#1a1a1a" stroke-width="1.1"/>
<text x="0" y="0" font-family="Liberation Mono" font-size="15" fill="#111" stroke="#e8e8e8" stroke-width="0.3" textLength="107" lengthAdjust="spacingAndGlyphs" transform="translate(666 838) rotate(-1.85) skewX(-4)">REVISIONS</text>
<path d="M786 825 L790 834" stroke="#1a1a1a" stroke-width="1.1"/>
<text x="0" y="0" font-family="Liberation Mono" font-size="15" fill="#111" stroke="#e8e8e8" stroke-width="0.3" textLength="80" lengthAdjust="spacingAndGlyphs" transform="translate(797 834) rotate(-1.85) skewX(-4)">ECN&#160;No.</text>
<path d="M898 822 L902 831" stroke="#1a1a1a" stroke-width="1.1"/>
<text x="0" y="0" font-family="Liberation Mono" font-size="15" fill="#111" stroke="#e8e8e8" stroke-width="0.3" textLength="50" lengthAdjust="spacingAndGlyphs" transform="translate(912 830) rotate(-1.85) skewX(-4)">DATE</text>
<path d="M1047 817 L1051 826" stroke="#1a1a1a" stroke-width="1.1"/>
<text x="0" y="0" font-family="Liberation Mono" font-size="15" fill="#111" stroke="#e8e8e8" stroke-width="0.3" textLength="51" lengthAdjust="spacingAndGlyphs" transform="translate(1061 825) rotate(-1.85) skewX(-4)">NOTE</text>
<path d="M666 852 L670 861" stroke="#1a1a1a" stroke-width="1.1"/>
<text x="0" y="0" font-family="Liberation Mono" font-size="15" fill="#111" stroke="#e8e8e8" stroke-width="0.3" textLength="8" lengthAdjust="spacingAndGlyphs" transform="translate(681 860) rotate(-1.85) skewX(-4)">1</text>
<path d="M845 846 L849 855" stroke="#1a1a1a" stroke-width="1.1"/>
<text x="0" y="0" font-family="Liberation Mono" font-size="15" fill="#111" stroke="#e8e8e8" stroke-width="0.3" textLength="88" lengthAdjust="spacingAndGlyphs" transform="translate(859 855) rotate(-1.85) skewX(-4)">05P-0001</text>
<path d="M948 843 L952 852" stroke="#1a1a1a" stroke-width="1.1"/>
<text x="0" y="0" font-family="Liberation Mono" font-size="15" fill="#111" stroke="#e8e8e8" stroke-width="0.3" textLength="95" lengthAdjust="spacingAndGlyphs" transform="translate(960 851) rotate(-1.85) skewX(-4)">'05/02/14</text>
<path d="M1068 838 L1072 847" stroke="#1a1a1a" stroke-width="1.1"/>
<text x="0" y="0" font-family="Liberation Mono" font-size="15" fill="#111" stroke="#e8e8e8" stroke-width="0.3" textLength="138" lengthAdjust="spacingAndGlyphs" transform="translate(1081 847) rotate(-1.85) skewX(-4)">Change&#160;Shape</text>
<path d="M677 875 L681 884" stroke="#1a1a1a" stroke-width="1.1"/>
<text x="0" y="0" font-family="Liberation Mono" font-size="15" fill="#111" stroke="#e8e8e8" stroke-width="0.3" textLength="83" lengthAdjust="spacingAndGlyphs" transform="translate(704 884) rotate(-1.85) skewX(-4)">Designer</text>
<path d="M815 871 L819 880" stroke="#1a1a1a" stroke-width="1.1"/>
<text x="0" y="0" font-family="Liberation Mono" font-size="15" fill="#111" stroke="#e8e8e8" stroke-width="0.3" textLength="85" lengthAdjust="spacingAndGlyphs" transform="translate(841 879) rotate(-1.85) skewX(-4)">Engineer</text>
<path d="M955 866 L959 875" stroke="#1a1a1a" stroke-width="1.1"/>
<text x="0" y="0" font-family="Liberation Mono" font-size="15" fill="#111" stroke="#e8e8e8" stroke-width="0.3" textLength="77" lengthAdjust="spacingAndGlyphs" transform="translate(980 875) rotate(-1.85) skewX(-4)">Detailer</text>
<path d="M1085 862 L1089 871" stroke="#1a1a1a" stroke-width="1.1"/>
<text x="0" y="0" font-family="Liberation Mono" font-size="15" fill="#111" stroke="#e8e8e8" stroke-width="0.3" textLength="81" lengthAdjust="spacingAndGlyphs" transform="translate(1109 870) rotate(-1.85) skewX(-4)">Checked</text>
<path d="M1215 858 L1219 867" stroke="#1a1a1a" stroke-width="1.1"/>
<path d="M690 897 L694 906" stroke="#1a1a1a" stroke-width="1.1"/>
<text x="0" y="0" font-family="Liberation Mono" font-size="15" fill="#111" stroke="#e8e8e8" stroke-width="0.3" textLength="9" lengthAdjust="spacingAndGlyphs" transform="translate(707 905) rotate(-1.85) skewX(-4)">A</text>
<path d="M861 892 L865 901" stroke="#1a1a1a" stroke-width="1.1"/>
<text x="0" y="0" font-family="Liberation Mono" font-size="15" fill="#111" stroke="#e8e8e8" stroke-width="0.3" textLength="9" lengthAdjust="spacingAndGlyphs" transform="translate(888 901) rotate(-1.85) skewX(-4)">B</text>
<path d="M1022 887 L1026 896" stroke="#1a1a1a" stroke-width="1.1"/>
<text x="0" y="0" font-family="Liberation Mono" font-size="15" fill="#111" stroke="#e8e8e8" stroke-width="0.3" textLength="11" lengthAdjust="spacingAndGlyphs" transform="translate(1046 895) rotate(-1.85) skewX(-4)">C</text>
<path d="M1159 883 L1163 892" stroke="#1a1a1a" stroke-width="1.1"/>
<text x="0" y="0" font-family="Liberation Mono" font-size="15" fill="#111" stroke="#e8e8e8" stroke-width="0.3" textLength="11" lengthAdjust="spacingAndGlyphs" transform="translate(1184 891) rotate(-1.85) skewX(-4)">D</text>
</svg></div>
</body></html>
